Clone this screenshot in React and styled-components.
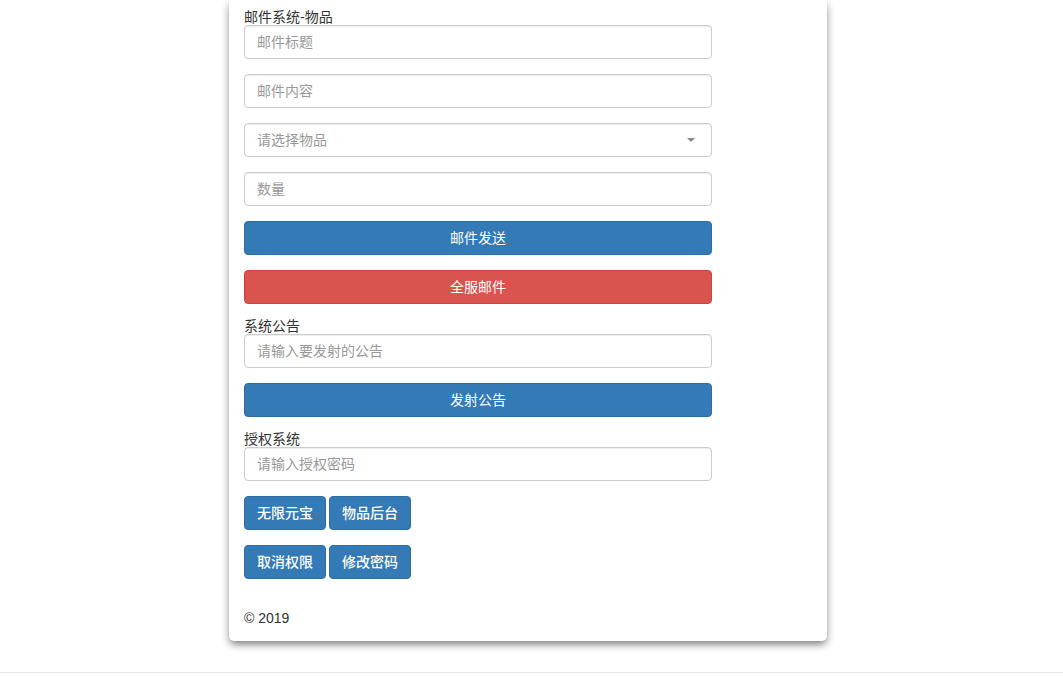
import React from "react";
import styled, { createGlobalStyle } from "styled-components";

const GlobalStyle = createGlobalStyle`
  html, body {
    margin: 0;
    padding: 0;
    background: #fff;
  }
  body {
    font-family: "Liberation Sans", "Noto Sans CJK SC", sans-serif;
    font-size: 14px;
    color: #333;
  }
  * {
    box-sizing: border-box;
  }
`;

function App() {
  return (
    <Page>
      <GlobalStyle />
      <Card>
        <Form>
          <Label>邮件系统-物品</Label>
          <Group>
            <Input type="text" placeholder="邮件标题" />
          </Group>
          <Group>
            <Input type="text" placeholder="邮件内容" />
          </Group>
          <Group>
            <SelectBox>
              <span>请选择物品</span>
              <Caret />
            </SelectBox>
          </Group>
          <Group>
            <Input type="text" placeholder="数量" />
          </Group>
          <Group>
            <BlockBtn>邮件发送</BlockBtn>
          </Group>
          <Group>
            <BlockBtn danger>全服邮件</BlockBtn>
          </Group>

          <Label>系统公告</Label>
          <Group>
            <Input type="text" placeholder="请输入要发射的公告" />
          </Group>
          <Group>
            <BlockBtn>发射公告</BlockBtn>
          </Group>

          <Label>授权系统</Label>
          <Group>
            <Input type="text" placeholder="请输入授权密码" />
          </Group>
          <BtnRow>
            <SmallBtn>无限元宝</SmallBtn>
            <SmallBtn>物品后台</SmallBtn>
          </BtnRow>
          <BtnRow>
            <SmallBtn>取消权限</SmallBtn>
            <SmallBtn>修改密码</SmallBtn>
          </BtnRow>
        </Form>
        <Footer>© 2019</Footer>
      </Card>
      <Rule />
    </Page>
  );
}

export default App;

const Page = styled.div`
  padding-left: 229px;
`;

const Card = styled.div`
  width: 598px;
  background: #fff;
  border-radius: 0 0 5px 5px;
  padding: 10px 15px 13px;
  box-shadow: 0 4px 8px -1px rgba(0, 0, 0, 0.55);
`;

const Form = styled.div`
  width: 468px;
`;

const Label = styled.div`
  height: 15px;
  line-height: 15px;
  font-size: 14px;
  color: #333;
  white-space: nowrap;
`;

const Group = styled.div`
  margin-bottom: 15px;
`;

const Input = styled.input`
  display: block;
  width: 100%;
  height: 34px;
  padding: 6px 12px;
  font-family: inherit;
  font-size: 14px;
  color: #555;
  background: #fff;
  border: 1px solid #ccc;
  border-radius: 4px;
  box-shadow: inset 0 1px 1px rgba(0, 0, 0, 0.075);
  outline: none;

  &::placeholder {
    color: #999;
  }
`;

const SelectBox = styled.div`
  display: flex;
  align-items: center;
  justify-content: space-between;
  height: 34px;
  padding: 0 16px 2px 12px;
  color: #999;
  border: 1px solid #ccc;
  border-radius: 4px;
  box-shadow: inset 0 1px 1px rgba(0, 0, 0, 0.075);
`;

const Caret = styled.i`
  width: 0;
  height: 0;
  margin-top: 2px;
  border-left: 4px solid transparent;
  border-right: 4px solid transparent;
  border-top: 4px solid #888;
`;

const BlockBtn = styled.div`
  display: flex;
  align-items: center;
  justify-content: center;
  height: 34px;
  padding-bottom: 2px;
  color: #fff;
  font-size: 14px;
  border-radius: 4px;
  background: ${(p) => (p.danger ? "#d9534f" : "#337ab7")};
  border: 1px solid ${(p) => (p.danger ? "#d43f3a" : "#2e6da4")};
`;

const BtnRow = styled.div`
  display: flex;
  gap: 3px;
  margin-bottom: 15px;

  &:last-child {
    margin-bottom: 0;
  }
`;

const SmallBtn = styled.div`
  display: flex;
  align-items: center;
  justify-content: center;
  width: 82px;
  height: 34px;
  padding-bottom: 2px;
  color: #fff;
  font-size: 14px;
  font-weight: 500;
  background: #337ab7;
  border: 1px solid #2e6da4;
  border-radius: 4px;
`;

const Footer = styled.div`
  margin-top: 29px;
  height: 20px;
  line-height: 20px;
  font-size: 14px;
  color: #333;
`;

const Rule = styled.div`
  margin: 31px 0 0 -229px;
  height: 1px;
  background: #e5e5e5;
`;
